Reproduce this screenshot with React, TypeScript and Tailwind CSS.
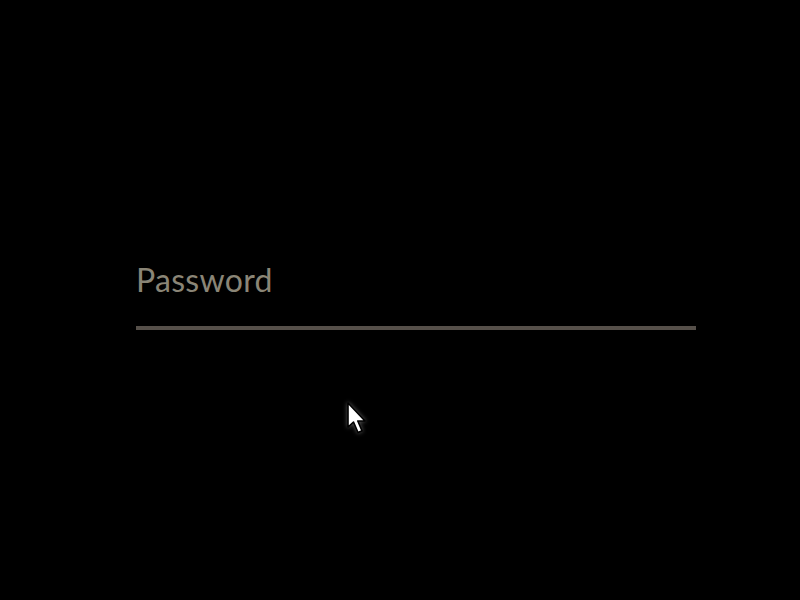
import React from 'react';

const Cursor: React.FC = () => (
  <svg
    width="26"
    height="36"
    viewBox="0 0 26 36"
    className="absolute left-[346px] top-[401px] drop-shadow-[0_0_2px_rgba(255,255,255,0.35)]"
  >
    <path
      d="M2 2 L2 26 L7.5 21 L12 31.5 L16 29.8 L11.8 20 L19 20 Z"
      fill="#ffffff"
      stroke="#000000"
      strokeWidth="1.6"
      strokeLinejoin="round"
    />
  </svg>
);

const App: React.FC = () => {
  return (
    <div className="relative w-full h-screen bg-black overflow-hidden" style={{ fontFamily: 'Lato, "Noto Sans", sans-serif' }}>
      <div className="pl-[136px] pt-[260px]">
        <div className="w-[560px] flex flex-col">
          <label className="text-[32px] leading-[40px] text-[#8a8576] tracking-[0.3px]">Password</label>
          <div className="mt-[26px] h-[4px] bg-[#56504a]" />
        </div>
      </div>
      <Cursor />
    </div>
  );
};

export default App;
